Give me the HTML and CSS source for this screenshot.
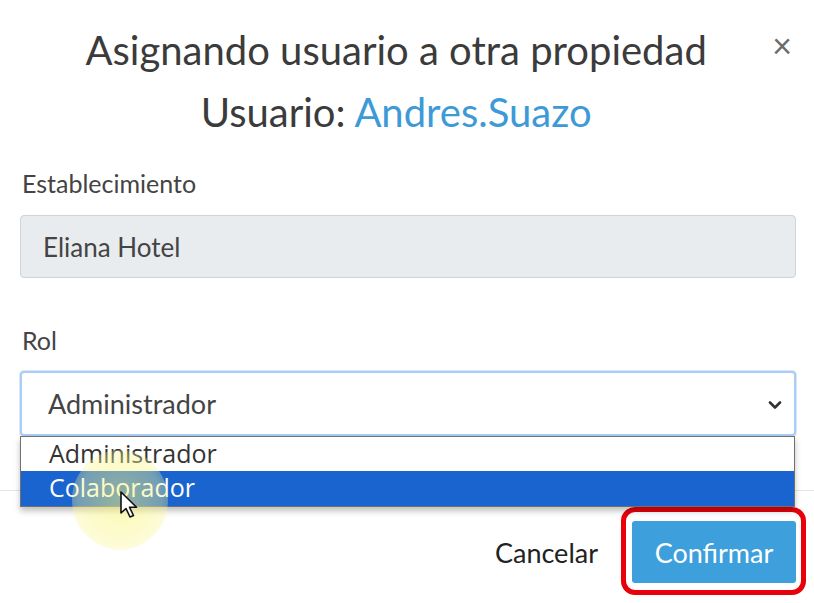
FILE: index.html
```html
<!DOCTYPE html>
<html lang="es">
<head>
  <meta charset="UTF-8">
  <meta name="viewport" content="width=device-width, initial-scale=1.0">
  <title>Asignar usuario</title>
  <link rel="stylesheet" href="styles.css">
</head>
<body>
  <div class="modal">
    <div class="modal-header">
      <h2 class="modal-title">
        Asignando usuario a otra propiedad<br>
        Usuario: <span class="user-name">Andres.Suazo</span>
      </h2>
      <button class="close-btn" type="button" aria-label="Cerrar">&times;</button>
    </div>

    <div class="modal-body">
      <div class="form-group">
        <label for="establecimiento">Establecimiento</label>
        <input type="text" id="establecimiento" class="form-control" value="Eliana Hotel" readonly>
      </div>

      <div class="form-group select-group">
        <label for="rol">Rol</label>
        <div class="form-control select-box">
          <span>Administrador</span>
          <svg class="chevron" width="14" height="10" viewBox="0 0 14 10">
            <path d="M2 2.5 L7 7.5 L12 2.5" fill="none" stroke="#333" stroke-width="2.6" stroke-linecap="round" stroke-linejoin="round"/>
          </svg>
        </div>
        <ul class="dropdown-list">
          <li>Administrador</li>
          <li class="active">Colaborador</li>
        </ul>
        <div class="cursor-glow"></div>
        <svg class="cursor" width="22" height="30" viewBox="0 0 22 30">
          <path d="M2 2 L2 23 L7 18.5 L11 27 L14.5 25.5 L10.5 17.2 L17.5 17.2 Z" fill="#fff" stroke="#111" stroke-width="1.6" stroke-linejoin="round"/>
        </svg>
      </div>
    </div>

    <div class="modal-footer">
      <button class="btn btn-link" type="button">Cancelar</button>
      <button class="btn btn-primary" type="button">
        Confirmar
        <span class="mark"></span>
      </button>
    </div>
  </div>
</body>
</html>
```

FILE: styles.css
```css
:root {
  --text: #3b3b3b;
  --accent: #3d9ad6;
  --primary: #3d9fdc;
  --border: #ced4da;
  --readonly: #e9ecef;
}

* {
  box-sizing: border-box;
  margin: 0;
  padding: 0;
}

body {
  font-family: 'Lato', 'Liberation Sans', sans-serif;
  background: #fff;
  color: var(--text);
  overflow: hidden;
}

.modal {
  width: 814px;
  height: 603px;
}

.modal-header {
  display: flex;
  align-items: flex-start;
  padding: 19px 22px 0 20px;
}

.modal-title {
  flex: 1;
  text-align: center;
  font-size: 40px;
  font-weight: 400;
  line-height: 62px;
  color: var(--text);
}

.user-name {
  color: var(--accent);
}

.close-btn {
  background: none;
  border: none;
  font-family: 'Lato', sans-serif;
  font-size: 34px;
  line-height: 52px;
  color: #6c6c6c;
  cursor: pointer;
}

.modal-body {
  padding: 25px 18px 54px 20px;
}

.form-group {
  margin-bottom: 47px;
}

.select-group {
  position: relative;
  margin-bottom: 0;
}

label {
  display: block;
  font-size: 25px;
  line-height: 30px;
  color: #444;
  margin-bottom: 17px;
  padding-left: 2px;
}

.select-group label {
  margin-bottom: 16px;
}

.form-control {
  display: block;
  width: 100%;
  height: 63px;
  padding: 0 22px;
  font-family: 'Lato', sans-serif;
  font-size: 26px;
  color: #444;
  border: 1.5px solid var(--border);
  border-radius: 4px;
}

input.form-control {
  background: var(--readonly);
  outline: none;
}

.select-box {
  display: flex;
  align-items: center;
  justify-content: space-between;
  height: 65px;
  padding: 0 12px 0 26px;
  font-size: 27px;
  border: 2px solid #a9cdf4;
  box-shadow: 0 0 0 1px #d6e8fb;
  background: #fff;
}

.chevron {
  margin-top: 2px;
}

.dropdown-list {
  position: absolute;
  top: 111px;
  left: 0;
  right: 1px;
  list-style: none;
  background: #fff;
  border: 1.5px solid #707070;
  box-shadow: 0 4px 6px rgba(0, 0, 0, 0.25);
  font-family: 'Open Sans', sans-serif;
  font-size: 25px;
  z-index: 2;
}

.dropdown-list li {
  height: 34px;
  line-height: 33px;
  padding-left: 28px;
  color: #333;
}

.dropdown-list li.active {
  background: #1a64d0;
  color: #fff;
  height: 35px;
}

.cursor-glow {
  position: absolute;
  left: 52px;
  top: 125px;
  width: 96px;
  height: 100px;
  border-radius: 50%;
  background: radial-gradient(circle, rgba(250, 245, 120, 0.55) 0%, rgba(250, 245, 140, 0.4) 60%, rgba(255, 255, 200, 0) 100%);
  z-index: 3;
  pointer-events: none;
}

.cursor {
  position: absolute;
  left: 99px;
  top: 165px;
  z-index: 4;
}

.modal-footer {
  display: flex;
  justify-content: flex-end;
  align-items: center;
  border-top: 1px solid #e5e5e5;
  padding: 30px 18px 0 20px;
}

.btn {
  font-family: 'Lato', sans-serif;
  font-size: 27px;
  border: none;
  border-radius: 3px;
  cursor: pointer;
}

.btn-link {
  background: none;
  color: #222;
  padding: 0 34px 0 18px;
}

.btn-primary {
  position: relative;
  background: var(--primary);
  color: #fff;
  width: 164px;
  height: 62px;
}

.mark {
  position: absolute;
  top: -14px;
  left: -11px;
  right: -10px;
  bottom: -12px;
  border: 5px solid #e8000b;
  border-radius: 14px;
}
```
